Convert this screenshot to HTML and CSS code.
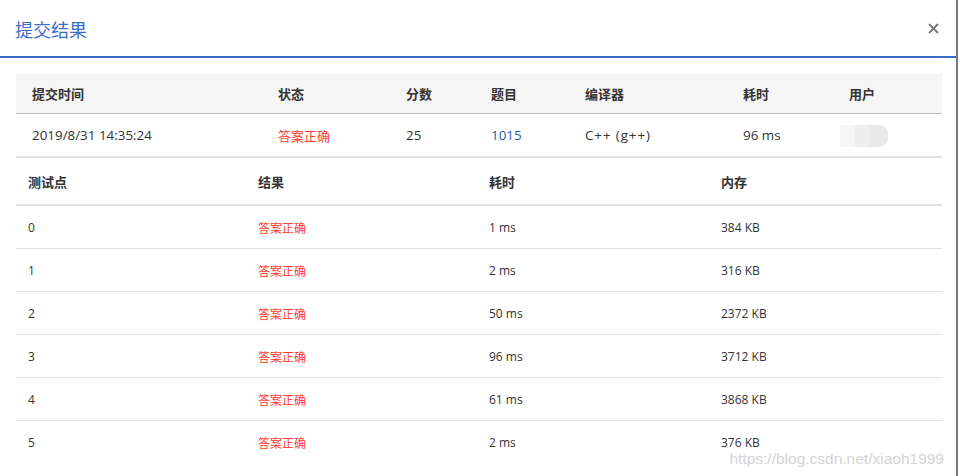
FILE: index.html
```html
<!DOCTYPE html>
<html lang="zh">
<head>
<meta charset="utf-8">
<title>提交结果</title>
<link rel="stylesheet" href="styles.css">
</head>
<body>
<div class="modal">
  <div class="modal-header">
    <h4 class="modal-title">提交结果</h4>
    <span class="close">
      <svg width="11" height="11" viewBox="0 0 11 11"><path d="M1 1L10 10M10 1L1 10" stroke="#777" stroke-width="1.8" fill="none"/></svg>
    </span>
  </div>
  <div class="modal-body">
    <div class="summary">
      <div class="row head">
        <div>提交时间</div><div>状态</div><div>分数</div><div>题目</div><div>编译器</div><div>耗时</div><div>用户</div>
      </div>
      <div class="row data">
        <div>2019/8/31 14:35:24</div>
        <div class="ok">答案正确</div>
        <div>25</div>
        <div class="link">1015</div>
        <div class="lang">C++ (g++)</div>
        <div>96 ms</div>
        <div><span class="blur"><i class="b1"></i><i class="b2"></i><i class="b3"></i></span></div>
      </div>
    </div>
    <div class="cases">
      <div class="crow chead"><div>测试点</div><div>结果</div><div>耗时</div><div>内存</div></div>
      <div class="crow"><div>0</div><div class="ok">答案正确</div><div>1 ms</div><div>384 KB</div></div>
      <div class="crow"><div>1</div><div class="ok">答案正确</div><div>2 ms</div><div>316 KB</div></div>
      <div class="crow"><div>2</div><div class="ok">答案正确</div><div>50 ms</div><div>2372 KB</div></div>
      <div class="crow"><div>3</div><div class="ok">答案正确</div><div>96 ms</div><div>3712 KB</div></div>
      <div class="crow"><div>4</div><div class="ok">答案正确</div><div>61 ms</div><div>3868 KB</div></div>
      <div class="crow last"><div>5</div><div class="ok">答案正确</div><div>2 ms</div><div>376 KB</div></div>
    </div>
  </div>
  <div class="watermark">https://blog.csdn.net/xiaoh1999</div>
</div>
</body>
</html>
```
FILE: styles.css
```css
html, body {
  margin: 0;
  padding: 0;
  background: #fff;
}
body {
  font-family: "Open Sans", "Noto Sans CJK SC", sans-serif;
  color: #333;
  width: 960px;
  height: 476px;
  overflow: hidden;
}
.modal {
  position: relative;
  width: 956px;
  height: 476px;
  border-right: 2px solid #7a7a7a;
  box-sizing: content-box;
}
.modal-header {
  height: 56px;
  border-bottom: 2px solid #3b6bc4;
  display: flex;
  align-items: center;
  justify-content: space-between;
  padding: 0 17px 0 15px;
}
.modal-title {
  margin: 0;
  font-weight: normal;
  font-size: 18px;
  color: #3d6ec8;
  font-family: "Noto Sans CJK SC", sans-serif;
  line-height: 20px;
  margin-top: 2px;
}
.close {
  display: flex;
  margin-top: 1px;
}
.modal-body {
  padding: 16px 16px 0 16px;
  width: 926px;
}
.row {
  display: grid;
  grid-template-columns: 262px 128px 85px 94px 158px 106px 93px;
  align-items: center;
}
.row > div {
  padding-left: 16px;
  font-size: 13.4px;
}
.row > div + div { padding-left: 0; }
.head {
  height: 39px;
  background: #f6f6f6;
  border-bottom: 1px solid #bdbdbd;
}
.head > div {
  font-size: 13px;
  font-weight: bold;
  font-family: "Noto Sans CJK SC", sans-serif;
}
.data {
  height: 42px;
  border-bottom: 2px solid #e1e2e6;
}
.ok {
  color: #ff3b30;
  font-family: "Noto Sans CJK SC", sans-serif;
}
.row .ok { font-size: 13px; }
.link { color: #2a5ea5; }
.lang { letter-spacing: 0.9px; }
.blur {
  display: inline-flex;
  margin-left: -9px;
  margin-top: 2px;
  height: 22px;
  vertical-align: middle;
}
.blur i { display: block; height: 100%; }
.blur .b1 { width: 15px; background: #f6f6f6; }
.blur .b2 { width: 15px; background: #eeeeee; }
.blur .b3 { width: 18px; background: #e9e9e9; border-radius: 0 9px 9px 0; }
.crow {
  display: grid;
  grid-template-columns: 242px 231px 232px 221px;
  align-items: center;
  height: 42px;
  border-bottom: 1px solid #dfdfe5;
  font-size: 12px;
}
.crow > div:first-child { padding-left: 12px; }
.chead {
  height: 46px;
  border-bottom: 2px solid #dfe0e4;
  font-size: 13px;
}
.chead > div {
  font-weight: bold;
  font-family: "Noto Sans CJK SC", sans-serif;
}
.crow.last { border-bottom: none; }
.watermark {
  position: absolute;
  right: 12px;
  bottom: 8px;
  font-family: "Liberation Sans", sans-serif;
  font-size: 15.5px;
  color: #d4d4d4;
}
```
